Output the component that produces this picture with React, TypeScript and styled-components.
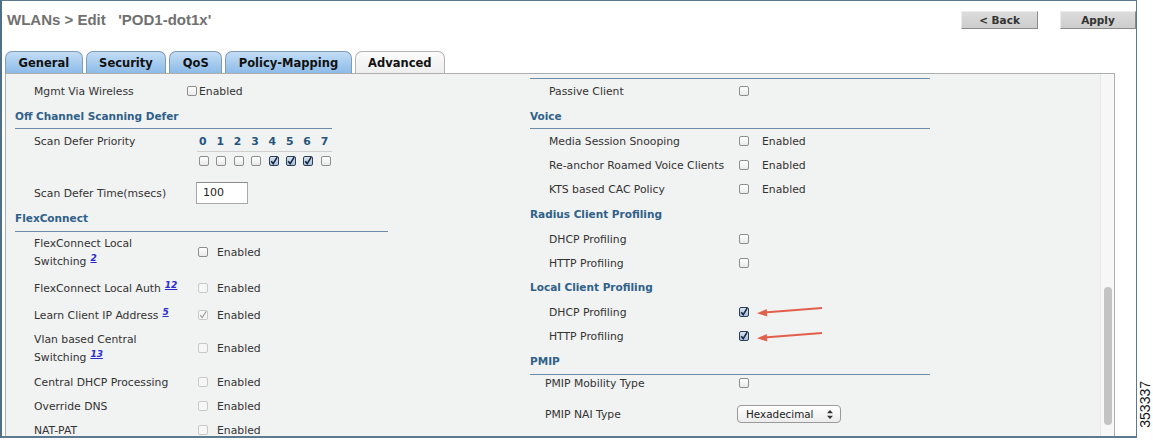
import React from 'react';
import styled, { createGlobalStyle } from 'styled-components';

const GlobalStyle = createGlobalStyle`
  html, body {
    margin: 0;
    padding: 0;
    background: #fff;
  }
  body {
    font-family: "DejaVu Sans", Verdana, sans-serif;
    font-size: 10.8px;
    color: #333;
  }
`;

const Page = styled.div`
  display: flex;
  width: 1153px;
  height: 440px;
  overflow: hidden;
`;

const Frame = styled.div`
  width: 1137px;
  height: 438px;
  box-sizing: border-box;
  border: 1px solid #5b7a90;
  border-left: 2px solid #4f6f88;
  border-bottom: 2px solid #5b7a90;
  background: #fff;
  display: flex;
  flex-direction: column;
  overflow: hidden;
`;

const SideNote = styled.div`
  flex: 1;
  display: flex;
  justify-content: center;
  align-items: flex-end;
  padding-bottom: 12px;
`;

const SideText = styled.span`
  writing-mode: vertical-rl;
  transform: rotate(180deg);
  font-family: "Liberation Sans", Arial, sans-serif;
  font-size: 14px;
  color: #111;
`;

/* ---------- header ---------- */

const Header = styled.div`
  display: flex;
  align-items: flex-start;
  justify-content: space-between;
  height: 49px;
  padding-left: 5px;
  flex-shrink: 0;
`;

const Title = styled.h1`
  margin: 9px 0 0;
  font-family: "Liberation Sans", Arial, sans-serif;
  font-size: 15px;
  line-height: 20px;
  font-weight: bold;
  color: #707070;
  white-space: pre;
`;

const Actions = styled.div`
  display: flex;
  gap: 22px;
  margin-top: 10px;
`;

const ActionButton = styled.button<{ $w: number }>`
  width: ${p => p.$w}px;
  height: 18px;
  padding: 0;
  box-sizing: border-box;
  border: none;
  border-right: 1px solid #8a8a8a;
  border-bottom: 1px solid #8a8a8a;
  border-left: 1px solid #ececec;
  border-top: 1px solid #ececec;
  background: linear-gradient(#dcdcdc, #cdcdcd);
  font-family: "DejaVu Sans", Verdana, sans-serif;
  font-size: 10.5px;
  font-weight: bold;
  color: #333;
`;

/* ---------- tabs ---------- */

const TabBar = styled.div`
  display: flex;
  align-items: flex-end;
  gap: 3px;
  padding-left: 3px;
  height: 23px;
  flex-shrink: 0;
`;

const Tab = styled.div<{ $active?: boolean }>`
  height: 22px;
  box-sizing: border-box;
  padding: 0 12.5px;
  display: flex;
  align-items: center;
  border: 1px solid ${p => (p.$active ? '#b4b4b4' : '#7e9cb8')};
  border-bottom: none;
  border-radius: 7px 7px 0 0;
  background: ${p =>
    p.$active
      ? 'linear-gradient(#fbfbfb, #eeeeee)'
      : 'linear-gradient(#c3ddf5, #8dbbe8)'};
  font-size: 11.5px;
  font-weight: bold;
  color: #111;
`;

/* ---------- panel ---------- */

const Panel = styled.div`
  flex: 1;
  min-height: 0;
  width: 1110px;
  margin-left: 3px;
  box-sizing: border-box;
  border: 1px solid #adadad;
  border-bottom: none;
  background: #f1f2f2;
  display: flex;
  overflow: hidden;
`;

const Columns = styled.div`
  flex: 1;
  display: grid;
  grid-template-columns: 524px 1fr;
  align-items: start;
`;

const Column = styled.div<{ $top?: number }>`
  display: flex;
  flex-direction: column;
  padding-top: ${p => p.$top ?? 0}px;
`;

const ScrollTrack = styled.div`
  width: 14px;
  box-sizing: border-box;
  border-left: 1px solid #e6e6e6;
  background: #f7f7f7;
  padding: 213px 0 0 3px;
`;

const ScrollThumb = styled.div`
  width: 8px;
  height: 138px;
  border-radius: 4px;
  background: #c3c3c3;
`;

const Rule = styled.div<{ $w: number }>`
  width: ${p => p.$w}px;
  height: 1px;
  background: #6a8ca8;
`;

const SectionHead = styled.div<{ $h: number; $w?: number; $offset?: number; $line?: boolean }>`
  height: ${p => p.$h}px;
  box-sizing: border-box;
  margin-left: ${p => p.$offset ?? 0}px;
  width: ${p => (p.$w ? `${p.$w}px` : 'auto')};
  display: flex;
  align-items: center;
  border-bottom: ${p => (p.$line ? '1px solid #6a8ca8' : 'none')};
  font-size: 10.5px;
  font-weight: bold;
  color: #2f6189;
`;

const Row = styled.div<{ $h: number; $indent: number }>`
  position: relative;
  height: ${p => p.$h}px;
  display: flex;
  align-items: center;
  padding-left: ${p => p.$indent}px;
`;

const Label = styled.div<{ $w: number }>`
  width: ${p => p.$w}px;
  flex-shrink: 0;
  line-height: 18px;
  padding-top: 2px;
  white-space: nowrap;
`;

const Note = styled.a`
  margin-left: 4px;
  font-size: 9px;
  line-height: 0;
  font-weight: bold;
  font-style: italic;
  color: #2b2bd0;
  text-decoration: underline;
  vertical-align: 4px;
`;

const Box = styled.span<{ $checked?: boolean; $disabled?: boolean }>`
  width: 10px;
  height: 10px;
  box-sizing: border-box;
  flex-shrink: 0;
  display: inline-flex;
  align-items: center;
  justify-content: center;
  border-radius: 2px;
  border: 1px solid
    ${p => (p.$checked && !p.$disabled ? '#2d3f55' : p.$disabled ? '#c9c9c9' : '#8d8d8d')};
  background: ${p =>
    p.$checked && !p.$disabled
      ? 'linear-gradient(#d6e2f1, #a9bfdc)'
      : p.$disabled
      ? '#f6f6f6'
      : 'linear-gradient(#ffffff, #e9e9e9)'};
  svg {
    overflow: visible;
  }
`;

const Enabled = styled.span<{ $gap: number }>`
  margin-left: ${p => p.$gap}px;
  padding-top: 1px;
`;

const PriorityBlock = styled.div`
  height: 51px;
  display: flex;
  align-items: flex-start;
  padding: 2px 0 0 28px;
  box-sizing: border-box;
`;

const PriorityGrid = styled.div`
  display: flex;
  flex-direction: column;
  width: 135px;
`;

const DigitRow = styled.div`
  display: flex;
  height: 20px;
  align-items: center;
  padding-left: 2px;
  border-bottom: 1px solid #cfcfcf;
`;

const BoxRow = styled.div`
  display: flex;
  height: 18px;
  align-items: center;
  padding-left: 2px;
`;

const Cell = styled.span`
  width: 17.4px;
  flex-shrink: 0;
  display: flex;
  align-items: center;
  font-weight: bold;
  color: #24557c;
  font-size: 10.8px;
`;

const TextInput = styled.div`
  width: 52px;
  height: 22px;
  box-sizing: border-box;
  border: 1px solid #a8a8a8;
  border-top-color: #8c8c8c;
  background: #fff;
  display: flex;
  align-items: center;
  padding-left: 6px;
  font-size: 11px;
  color: #222;
`;

const SelectBox = styled.div`
  width: 104px;
  height: 18px;
  box-sizing: border-box;
  border: 1px solid #9a9a9a;
  border-radius: 4px;
  background: linear-gradient(#ffffff, #ececec);
  display: flex;
  align-items: center;
  justify-content: space-between;
  padding: 0 7px 0 8px;
  font-size: 10.4px;
  color: #222;
`;

const ArrowMark = styled.svg`
  position: absolute;
  left: 222px;
  top: 0;
`;

/* ---------- pieces ---------- */

const Check = ({ checked, disabled }: { checked?: boolean; disabled?: boolean }) => (
  <Box $checked={checked} $disabled={disabled}>
    {checked && (
      <svg width="8" height="8" viewBox="0 0 8 8">
        <path
          d="M1.2 4.2 L3.2 6.6 L7.2 0.2"
          fill="none"
          stroke={disabled ? '#9a9a9a' : '#16283f'}
          strokeWidth={disabled ? 1.1 : 1.6}
        />
      </svg>
    )}
  </Box>
);

const RedArrow = () => (
  <ArrowMark width="76" height="24" viewBox="0 0 76 24">
    <line x1="70" y1="9" x2="12" y2="13.6" stroke="#e1604c" strokeWidth="2" />
    <polygon points="5,14.3 15.2,17.4 14.7,10.1" fill="#e1604c" />
  </ArrowMark>
);

const Updown = () => (
  <svg width="6" height="9" viewBox="0 0 6 9">
    <polygon points="3,0 6,3.3 0,3.3" fill="#333" />
    <polygon points="0,5.7 6,5.7 3,9" fill="#333" />
  </svg>
);

const priorities = [0, 1, 2, 3, 4, 5, 6, 7];
const priorityOn = [4, 5, 6];

export default function App() {
  return (
    <>
      <GlobalStyle />
      <Page>
        <Frame>
          <Header>
            <Title>{"WLANs > Edit   'POD1-dot1x'"}</Title>
            <Actions>
              <ActionButton $w={77}>&lt; Back</ActionButton>
              <ActionButton $w={76}>Apply</ActionButton>
            </Actions>
          </Header>

          <TabBar>
            <Tab>General</Tab>
            <Tab>Security</Tab>
            <Tab>QoS</Tab>
            <Tab>Policy-Mapping</Tab>
            <Tab $active>Advanced</Tab>
          </TabBar>

          <Panel>
            <Columns>
              <Column $top={5}>
                <Row $h={24} $indent={28}>
                  <Label $w={153}>Mgmt Via Wireless</Label>
                  <Check />
                  <Enabled $gap={2}>Enabled</Enabled>
                </Row>

                <SectionHead $h={26} $w={317} $offset={9} $line>
                  Off Channel Scanning Defer
                </SectionHead>

                <PriorityBlock>
                  <Label $w={163}>Scan Defer Priority</Label>
                  <PriorityGrid>
                    <DigitRow>
                      {priorities.map(n => (
                        <Cell key={n}>{n}</Cell>
                      ))}
                    </DigitRow>
                    <BoxRow>
                      {priorities.map(n => (
                        <Cell key={n}>
                          <Check checked={priorityOn.includes(n)} />
                        </Cell>
                      ))}
                    </BoxRow>
                  </PriorityGrid>
                </PriorityBlock>

                <Row $h={25} $indent={28}>
                  <Label $w={162}>Scan Defer Time(msecs)</Label>
                  <TextInput>100</TextInput>
                </Row>

                <SectionHead $h={27} $w={373} $offset={9} $line>
                  FlexConnect
                </SectionHead>

                <Row $h={40} $indent={28}>
                  <Label $w={164}>
                    FlexConnect Local
                    <br />
                    Switching<Note>2</Note>
                  </Label>
                  <Check />
                  <Enabled $gap={9}>Enabled</Enabled>
                </Row>
                <Row $h={32} $indent={28}>
                  <Label $w={164}>
                    FlexConnect Local Auth<Note>12</Note>
                  </Label>
                  <Check disabled />
                  <Enabled $gap={9}>Enabled</Enabled>
                </Row>
                <Row $h={22} $indent={28}>
                  <Label $w={164}>
                    Learn Client IP Address<Note>5</Note>
                  </Label>
                  <Check checked disabled />
                  <Enabled $gap={9}>Enabled</Enabled>
                </Row>
                <Row $h={44} $indent={28}>
                  <Label $w={164}>
                    Vlan based Central
                    <br />
                    Switching<Note>13</Note>
                  </Label>
                  <Check disabled />
                  <Enabled $gap={9}>Enabled</Enabled>
                </Row>
                <Row $h={24} $indent={28}>
                  <Label $w={164}>Central DHCP Processing</Label>
                  <Check disabled />
                  <Enabled $gap={9}>Enabled</Enabled>
                </Row>
                <Row $h={24} $indent={28}>
                  <Label $w={164}>Override DNS</Label>
                  <Check disabled />
                  <Enabled $gap={9}>Enabled</Enabled>
                </Row>
                <Row $h={24} $indent={28}>
                  <Label $w={164}>NAT-PAT</Label>
                  <Check disabled />
                  <Enabled $gap={9}>Enabled</Enabled>
                </Row>
              </Column>

              <Column $top={4}>
                <Rule $w={400} />
                <Row $h={24} $indent={19}>
                  <Label $w={190}>Passive Client</Label>
                  <Check />
                </Row>

                <SectionHead $h={26} $w={400} $line>
                  Voice
                </SectionHead>
                <Row $h={24} $indent={19}>
                  <Label $w={190}>Media Session Snooping</Label>
                  <Check />
                  <Enabled $gap={13}>Enabled</Enabled>
                </Row>
                <Row $h={24} $indent={19}>
                  <Label $w={190}>Re-anchor Roamed Voice Clients</Label>
                  <Check />
                  <Enabled $gap={13}>Enabled</Enabled>
                </Row>
                <Row $h={24} $indent={19}>
                  <Label $w={190}>KTS based CAC Policy</Label>
                  <Check />
                  <Enabled $gap={13}>Enabled</Enabled>
                </Row>

                <SectionHead $h={26}>Radius Client Profiling</SectionHead>
                <Row $h={24} $indent={19}>
                  <Label $w={190}>DHCP Profiling</Label>
                  <Check />
                </Row>
                <Row $h={24} $indent={19}>
                  <Label $w={190}>HTTP Profiling</Label>
                  <Check />
                </Row>

                <SectionHead $h={24}>Local Client Profiling</SectionHead>
                <Row $h={25} $indent={19}>
                  <Label $w={190}>DHCP Profiling</Label>
                  <Check checked />
                  <RedArrow />
                </Row>
                <Row $h={24} $indent={19}>
                  <Label $w={190}>HTTP Profiling</Label>
                  <Check checked />
                  <RedArrow />
                </Row>

                <SectionHead $h={27} $w={400} $line>
                  PMIP
                </SectionHead>
                <Row $h={15} $indent={15}>
                  <Label $w={194}>PMIP Mobility Type</Label>
                  <Check />
                </Row>
                <Row $h={48} $indent={15}>
                  <Label $w={192}>PMIP NAI Type</Label>
                  <SelectBox>
                    <span>Hexadecimal</span>
                    <Updown />
                  </SelectBox>
                </Row>
              </Column>
            </Columns>

            <ScrollTrack>
              <ScrollThumb />
            </ScrollTrack>
          </Panel>
        </Frame>
        <SideNote>
          <SideText>353337</SideText>
        </SideNote>
      </Page>
    </>
  );
}
